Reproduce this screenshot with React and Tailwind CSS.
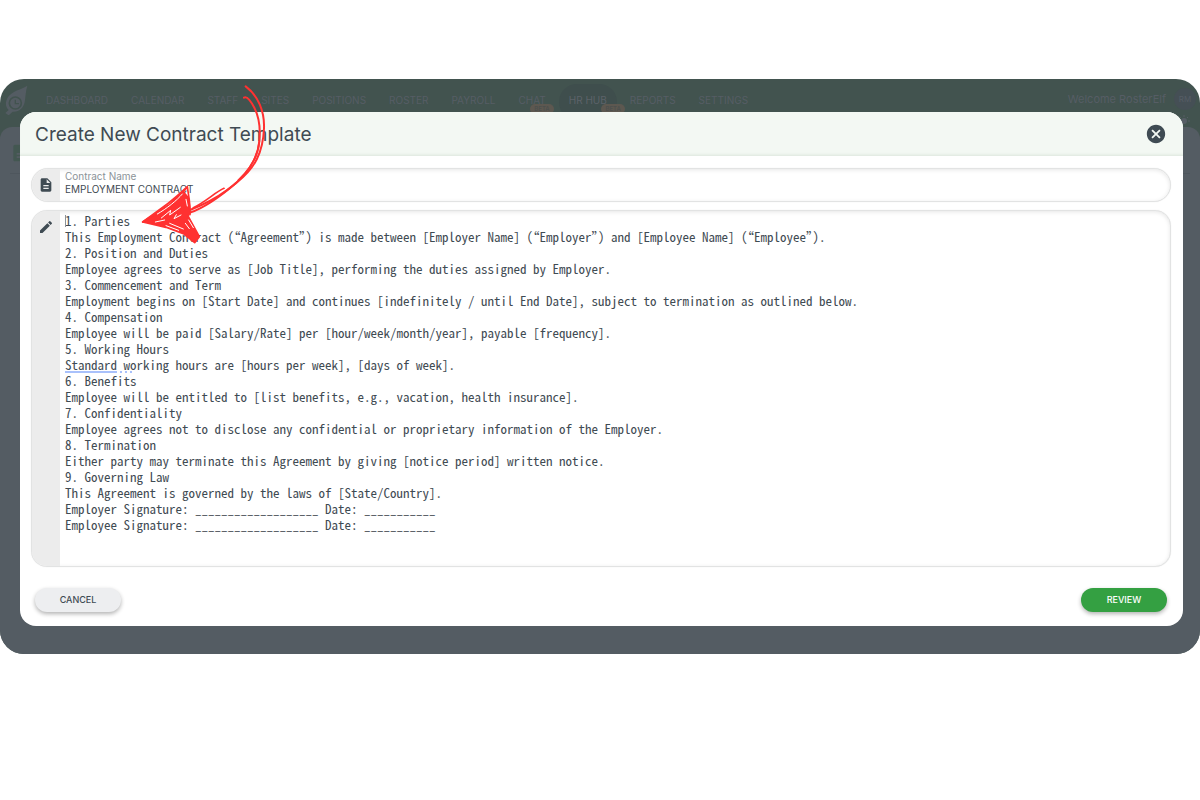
import React from "react";
import { MdDescription, MdEdit, MdCancel } from "react-icons/md";

const NAV = [
  { label: "DASHBOARD" },
  { label: "CALENDAR" },
  { label: "STAFF" },
  { label: "SITES" },
  { label: "POSITIONS" },
  { label: "ROSTER" },
  { label: "PAYROLL" },
  { label: "CHAT", beta: true },
  { label: "HR HUB", beta: true, active: true },
  { label: "REPORTS" },
  { label: "SETTINGS" },
];

const CONTRACT = `1. Parties
This Employment Contract (“Agreement”) is made between [Employer Name] (“Employer”) and [Employee Name] (“Employee”).
2. Position and Duties
Employee agrees to serve as [Job Title], performing the duties assigned by Employer.
3. Commencement and Term
Employment begins on [Start Date] and continues [indefinitely / until End Date], subject to termination as outlined below.
4. Compensation
Employee will be paid [Salary/Rate] per [hour/week/month/year], payable [frequency].
5. Working Hours
Standard working hours are [hours per week], [days of week].
6. Benefits
Employee will be entitled to [list benefits, e.g., vacation, health insurance].
7. Confidentiality
Employee agrees not to disclose any confidential or proprietary information of the Employer.
8. Termination
Either party may terminate this Agreement by giving [notice period] written notice.
9. Governing Law
This Agreement is governed by the laws of [State/Country].
Employer Signature: ___________________ Date: ___________
Employee Signature: ___________________ Date: ___________`;

function Logo() {
  return (
    <svg viewBox="0 0 84 102" className="h-[34px] w-7" aria-hidden="true">
      <path
        fill="#545c63"
        d="M82 14 C66 26 34 28 22 52 C14 68 18 80 26 87 L16 96 L26 103 L38 92 C56 94 70 82 74 64 C77 46 77 30 82 14 Z"
      />
      <circle cx="46" cy="66" r="18" fill="none" stroke="#42534f" strokeWidth="5" />
      <path d="M46 56 V68 H57" fill="none" stroke="#42534f" strokeWidth="4" />
    </svg>
  );
}

function Backdrop() {
  return (
    <div className="absolute inset-0 flex flex-col bg-[#42534f] text-[#565d65]">
      <div className="flex h-12 shrink-0 items-start justify-between pr-1">
        <div className="flex items-start">
          <div className="pt-0.5">
            <Logo />
          </div>
          <nav className="flex items-start gap-[23px] pl-[18px] pt-[5px] text-[10px] leading-8">
            {NAV.map((item) => (
              <a
                key={item.label}
                href="#"
                className={
                  item.active
                    ? "relative -mx-2.5 h-9 rounded-full bg-[#3f4e4d] px-2.5 text-[#5c6269]"
                    : "relative"
                }
              >
                {item.label}
                {item.beta && (
                  <span className="absolute right-0 top-5 -mr-2 rounded-md bg-[#5d5850] px-1 text-[6px] font-semibold leading-[10px] text-[#4c504e]">
                    BETA
                  </span>
                )}
              </a>
            ))}
          </nav>
        </div>
        <div className="flex items-center gap-2 pt-2">
          <span className="text-[11px] leading-6">Welcome RosterElf</span>
          <span className="flex size-[22px] items-center justify-center rounded-full bg-[#454f55] text-[8px]">
            RM
          </span>
        </div>
      </div>
      <div className="grow rounded-t-xl bg-[#545c63] px-2.5 pt-4">
        <MdDescription className="size-5 text-[#435751]" />
        <div className="mt-2.5 border-t border-[#4e565d]" />
      </div>
      <svg viewBox="0 0 12 12" className="absolute right-2.5 top-9 size-3" aria-hidden="true">
        <circle cx="6" cy="6" r="3" fill="#565d65" />
        <path d="M6 0v2M10 2l-1 1M12 6h-2M2 2l1 1M0 6h2" stroke="#565d65" fill="none" />
      </svg>
    </div>
  );
}

function SketchArrow() {
  return (
    <svg
      viewBox="0 0 450 510"
      className="pointer-events-none absolute left-[130px] top-px z-20 h-[170px] w-[150px]"
      fill="none"
      stroke="#ff3131"
      strokeLinecap="round"
      strokeLinejoin="round"
      aria-hidden="true"
    >
      <path strokeWidth="6" d="M347 19 C385 47 404 95 402 145 C399 218 375 264 322 306 C280 342 225 383 180 398" />
      <path strokeWidth="6" d="M342 53 C352 47 364 66 373 83 C389 114 391 153 388 184 C382 245 345 292 290 331 C250 361 210 378 180 390" />
      <path strokeWidth="5" d="M282 325 C258 335 226 366 190 383 M388 184 C384 222 364 264 325 300" />
      <path fill="#ff3131" strokeWidth="5" d="M38 426 L118 374 L160 335 L176 355 L180 398 L174 408 L208 470 L194 488 L162 462 L108 442 Z" />
      <path strokeWidth="5" d="M38 426 C85 395 132 358 172 320 C176 350 182 374 180 404 M38 426 L158 338 L172 320" />
      <path stroke="#fff" strokeWidth="3" d="M82 402 C110 386 140 362 157 342 M94 414 L122 391 L119 405 L151 382 M76 426 L104 420 M139 404 L132 416 L153 405 M119 430 L160 447 M108 437 L146 451 M176 420 L190 443 M166 430 L178 446 M168 358 L172 378" />
    </svg>
  );
}

const FIELD =
  "relative flex overflow-hidden border border-[#e2e3e3] bg-white shadow-[inset_0_1px_4px_rgba(0,0,0,0.10),0_0_1px_rgba(0,0,0,0.12)] focus-within:border-[#c9cccc]";

export default function App() {
  return (
    <main className="min-h-screen bg-white pt-[79px] font-['Inter',sans-serif] text-[#3f4b53]">
      <div className="relative overflow-hidden rounded-3xl pb-7 pl-5 pr-[17px] pt-[33px]">
        <Backdrop />
        <SketchArrow />

        <section
          role="dialog"
          aria-labelledby="dialog-title"
          className="relative z-10 overflow-hidden rounded-2xl bg-white"
        >
          <header className="flex h-11 items-center justify-between bg-[#f3f8f3] pl-[15px] pr-4 shadow-[inset_0_-3px_3px_-2px_rgba(60,110,60,0.12)]">
            <h1 id="dialog-title" className="pt-0.5 text-[19px] leading-6">
              Create New Contract Template
            </h1>
            <button type="button" aria-label="Close" className="text-[#3f4b53]">
              <MdCancel className="size-[22px]" />
            </button>
          </header>

          <form className="px-3 pb-3.5 pl-[11px] pt-3" onSubmit={(e) => e.preventDefault()}>
            <div className={`${FIELD} rounded-[18px]`}>
              <div className="flex w-7 shrink-0 items-center justify-center bg-[#ececec]">
                <MdDescription className="size-4" />
              </div>
              <div className="flex grow flex-col pb-[5px] pl-[5px] pt-px">
                <label htmlFor="contract-name" className="text-[10px] leading-3 text-[#8b9398]">
                  Contract Name
                </label>
                <input
                  id="contract-name"
                  defaultValue="EMPLOYMENT CONTRACT"
                  className="h-3.5 bg-transparent text-[10px] leading-3.5 outline-none"
                />
              </div>
            </div>

            <div className={`${FIELD} mt-2 rounded-2xl`}>
              <label
                htmlFor="contract-body"
                aria-label="Contract text"
                className="flex w-7 shrink-0 justify-center bg-[#ececec] pt-2"
              >
                <MdEdit className="size-4" />
              </label>
              <div className="relative grow">
                <textarea
                  id="contract-body"
                  rows={20}
                  spellCheck={false}
                  defaultValue={CONTRACT}
                  className="block w-full resize-none bg-transparent pb-[33px] pl-[5px] pt-0.5 font-['Noto_Sans_Mono_CJK_SC','DejaVu_Sans_Mono',monospace] text-[13px] leading-4 outline-none"
                />
                <span className="pointer-events-none absolute left-[5px] top-1 h-3 w-px bg-[#8b9398]" />
                <span className="pointer-events-none absolute left-[5px] top-40 flex items-center gap-[3px]">
                  <i className="h-0.5 w-13 bg-[#a9c1fb]" />
                  <i className="size-0.5 bg-[#a9c1fb]" />
                  <i className="size-0.5 bg-[#a9c1fb]" />
                  <i className="size-0.5 bg-[#a9c1fb]" />
                </span>
              </div>
            </div>

            <footer className="flex justify-between px-1 pt-[21px] text-[9px] font-medium">
              <button
                type="button"
                className="h-6 w-[86px] rounded-full bg-[#edeef0] shadow-[0_2px_4px_rgba(0,0,0,0.3)]"
              >
                CANCEL
              </button>
              <button
                type="submit"
                className="h-6 w-[86px] rounded-full bg-[#34a042] text-white shadow-[0_2px_4px_rgba(0,0,0,0.3)]"
              >
                REVIEW
              </button>
            </footer>
          </form>
        </section>
      </div>
    </main>
  );
}
